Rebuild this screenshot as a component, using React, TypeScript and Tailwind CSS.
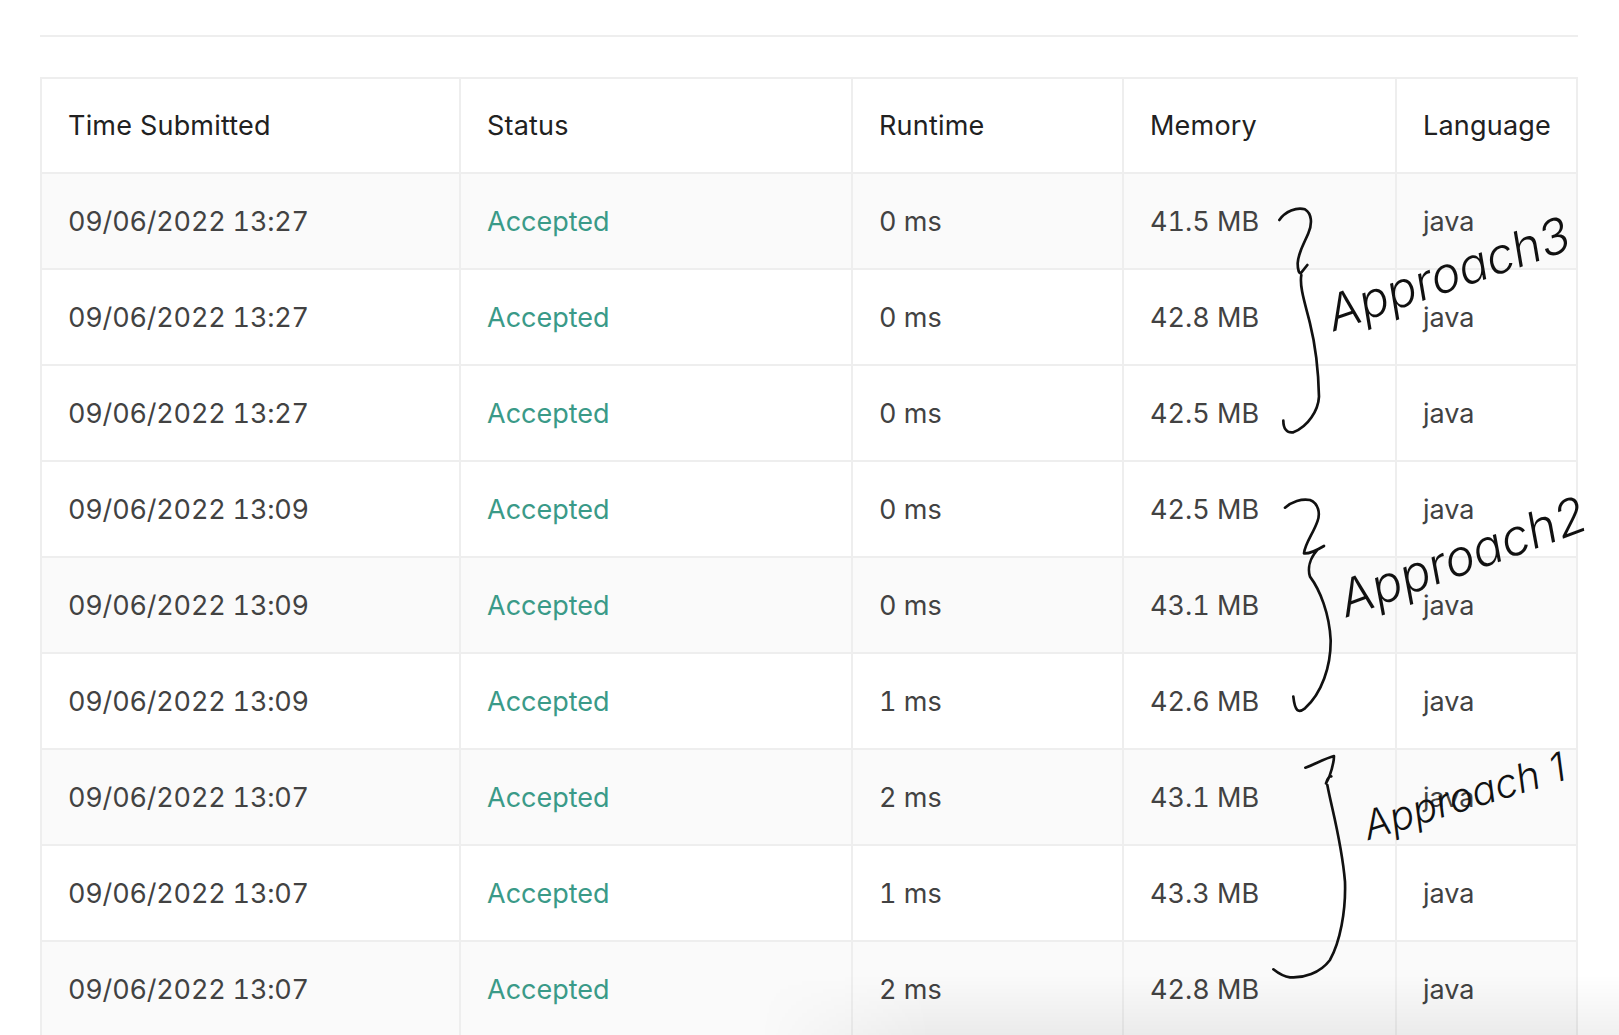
const rows = [
  { time: "09/06/2022 13:27", runtime: "0 ms", memory: "41.5 MB", striped: true },
  { time: "09/06/2022 13:27", runtime: "0 ms", memory: "42.8 MB", striped: false },
  { time: "09/06/2022 13:27", runtime: "0 ms", memory: "42.5 MB", striped: false },
  { time: "09/06/2022 13:09", runtime: "0 ms", memory: "42.5 MB", striped: false },
  { time: "09/06/2022 13:09", runtime: "0 ms", memory: "43.1 MB", striped: true },
  { time: "09/06/2022 13:09", runtime: "1 ms", memory: "42.6 MB", striped: false },
  { time: "09/06/2022 13:07", runtime: "2 ms", memory: "43.1 MB", striped: true },
  { time: "09/06/2022 13:07", runtime: "1 ms", memory: "43.3 MB", striped: false },
  { time: "09/06/2022 13:07", runtime: "2 ms", memory: "42.8 MB", striped: true },
];

const headers = ["Time Submitted", "Status", "Runtime", "Memory", "Language"];

const cell = "border-2 border-[#eeeeee] pl-[26px] pr-0 pt-[2px] pb-0 text-left align-middle font-normal";

// ink braces, coordinates taken from 3x crops of the screenshot
const Braces = () => (
  <svg className="absolute inset-0 w-full h-full pointer-events-none" viewBox="0 0 1619 1035" fill="none">
    <g stroke="#111" strokeWidth="8" strokeLinecap="round" strokeLinejoin="round" transform="translate(1230 180) scale(0.3333)">
      <path d="M148 120C165 95 200 80 225 88C245 100 248 130 235 160C225 185 205 215 203 250C203 270 208 280 212 280L232 255M214 285C208 320 225 370 240 430C255 490 265 560 267 650C265 690 235 740 190 757C170 760 160 745 160 722" />
    </g>
    <g stroke="#111" strokeWidth="8" strokeLinecap="round" strokeLinejoin="round" transform="translate(1230 470) scale(0.3333)">
      <path d="M165 113C185 95 215 85 240 90C265 100 272 130 262 155C250 190 225 220 222 250C235 252 265 238 282 228M262 240C240 265 232 295 240 320C270 360 298 430 302 510C303 590 275 670 225 715C205 730 195 725 190 680" />
    </g>
    <g stroke="#111" strokeWidth="8" strokeLinecap="round" strokeLinejoin="round" transform="translate(1230 735) scale(0.3333)">
      <path d="M226 98C250 90 285 70 312 63C312 85 305 105 298 125L288 145C292 130 300 122 304 124M292 150C305 220 335 320 345 440C348 530 330 620 300 675C270 715 220 730 180 727C160 725 145 715 130 703" />
    </g>
  </svg>
);

const inkLabel = "absolute origin-bottom-left whitespace-nowrap italic font-light text-[#111] leading-none";

export default function App() {
  return (
    <div className="relative h-[1035px] overflow-hidden bg-white pl-[40px] pr-[41px] font-['Inter',sans-serif] text-[27px]">
      <div className="mt-[35px] h-[2px] bg-[#eeeeee]" />
      <table className="mt-[40px] w-[1536px] table-fixed border-collapse">
        <colgroup>
          <col className="w-[419px]" />
          <col className="w-[392px]" />
          <col className="w-[271px]" />
          <col className="w-[273px]" />
          <col className="w-[181px]" />
        </colgroup>
        <thead>
          <tr>
            {headers.map((h) => (
              <th key={h} className={`${cell} h-[95px] text-[#212121] tracking-[0.2px]`}>
                {h}
              </th>
            ))}
          </tr>
        </thead>
        <tbody className="tabular-nums">
          {rows.map((r, i) => (
            <tr key={i} className={r.striped ? "bg-[#fafafa] text-[#424242]" : "bg-white text-[#424242]"}>
              <td className={`${cell} h-[96px] tracking-[-0.2px]`}>{r.time}</td>
              <td className={`${cell} text-[#3a9a88]`}>Accepted</td>
              <td className={cell}>{r.runtime}</td>
              <td className={cell}>{r.memory}</td>
              <td className={cell}>java</td>
            </tr>
          ))}
        </tbody>
      </table>

      <Braces />
      <span className={`${inkLabel} left-[1336px] top-[289px] text-[49px] -rotate-[19deg]`}>Approach3</span>
      <span className={`${inkLabel} left-[1349px] top-[574px] text-[50px] -rotate-[20deg]`}>Approach2</span>
      <span className={`${inkLabel} left-[1370px] top-[806px] text-[40px] -rotate-[17deg]`}>Approach 1</span>

      <div className="pointer-events-none absolute bottom-0 right-0 h-[60px] w-[860px] bg-[linear-gradient(to_top,rgba(0,0,0,0.06),transparent)] [mask-image:linear-gradient(to_right,transparent,black_20%)]" />
    </div>
  );
}
